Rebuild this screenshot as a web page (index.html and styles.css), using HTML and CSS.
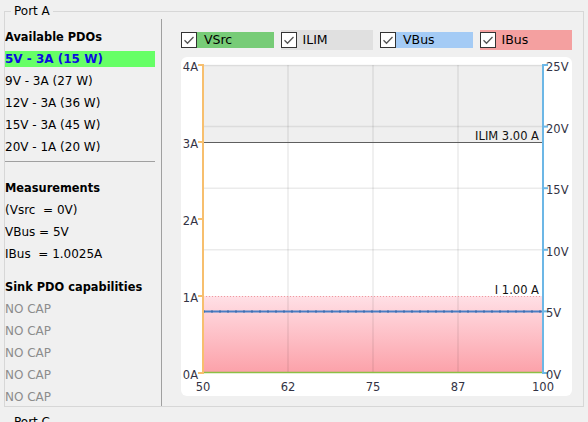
FILE: index.html
```html
<!DOCTYPE html>
<html>
<head>
<meta charset="utf-8">
<link rel="stylesheet" href="styles.css">
</head>
<body>
<div class="group port-a">
  <span class="group-title">Port A</span>
  <div class="group-body">
    <div class="side">
      <div class="row head">Available PDOs</div>
      <div class="row pdo sel">5V - 3A (15 W)</div>
      <div class="row pdo">9V - 3A (27 W)</div>
      <div class="row pdo">12V - 3A (36 W)</div>
      <div class="row pdo">15V - 3A (45 W)</div>
      <div class="row pdo">20V - 1A (20 W)</div>
      <div class="sep"></div>
      <div class="row head">Measurements</div>
      <div class="row">(Vsrc  = 0V)</div>
      <div class="row">VBus = 5V</div>
      <div class="row">IBus  = 1.0025A</div>
      <div class="row head sink">Sink PDO capabilities</div>
      <div class="row nocap">NO CAP</div>
      <div class="row nocap">NO CAP</div>
      <div class="row nocap">NO CAP</div>
      <div class="row nocap">NO CAP</div>
      <div class="row nocap">NO CAP</div>
    </div>
    <div class="vsep"></div>
    <div class="main">
      <div class="legend">
        <div class="item plain">
          <svg class="cb" width="16" height="16" viewBox="0 0 16 16"><rect x="0.5" y="0.5" width="15" height="15" fill="#fff" stroke="#333"/><polyline points="3.5,8.2 6.5,11.2 12.5,5" fill="none" stroke="#555" stroke-width="1.3"/></svg>
          <span class="lbl vsrc">VSrc</span>
        </div>
        <div class="item full ilim">
          <svg class="cb" width="16" height="16" viewBox="0 0 16 16"><rect x="0.5" y="0.5" width="15" height="15" fill="#fff" stroke="#333"/><polyline points="3.5,8.2 6.5,11.2 12.5,5" fill="none" stroke="#555" stroke-width="1.3"/></svg>
          <span class="lbl">ILIM</span>
        </div>
        <div class="item plain">
          <svg class="cb" width="16" height="16" viewBox="0 0 16 16"><rect x="0.5" y="0.5" width="15" height="15" fill="#fff" stroke="#333"/><polyline points="3.5,8.2 6.5,11.2 12.5,5" fill="none" stroke="#555" stroke-width="1.3"/></svg>
          <span class="lbl vbus">VBus</span>
        </div>
        <div class="item full ibus">
          <svg class="cb" width="16" height="16" viewBox="0 0 16 16"><rect x="0.5" y="0.5" width="15" height="15" fill="#fff" stroke="#333"/><polyline points="3.5,8.2 6.5,11.2 12.5,5" fill="none" stroke="#555" stroke-width="1.3"/></svg>
          <span class="lbl">IBus</span>
        </div>
      </div>
      <div class="card">
        <svg class="chart" width="391" height="339" viewBox="0 0 391 339">
          <defs>
            <linearGradient id="ibg" x1="0" y1="0" x2="0" y2="1">
              <stop offset="0" stop-color="#ffe0e6"/>
              <stop offset="1" stop-color="#fca1a9"/>
            </linearGradient>
          </defs>
          <rect x="22" y="8" width="340" height="77" fill="#efefef"/>
          <rect x="22" y="239" width="340" height="77" fill="url(#ibg)"/>
          <g stroke="rgba(0,0,0,0.06)" stroke-width="2">
            <line x1="107" y1="8" x2="107" y2="316"/>
            <line x1="192" y1="8" x2="192" y2="316"/>
            <line x1="277" y1="8" x2="277" y2="316"/>
          </g>
          <g stroke="rgba(0,0,0,0.08)" stroke-width="1.5">
            <line x1="22" y1="8.5" x2="362" y2="8.5"/>
            <line x1="22" y1="69.6" x2="362" y2="69.6"/>
            <line x1="22" y1="131.2" x2="362" y2="131.2"/>
            <line x1="22" y1="192.8" x2="362" y2="192.8"/>
          </g>
          <line x1="22" y1="239.5" x2="362" y2="239.5" stroke="#ee9a9f" stroke-dasharray="1 2"/>
          <line x1="361.5" y1="239" x2="361.5" y2="316" stroke="#ee9a9f" stroke-dasharray="1 2"/>
          <line x1="22" y1="85.5" x2="362" y2="85.5" stroke="#5e5e5e" stroke-width="1"/>
          <line x1="22" y1="254.4" x2="362" y2="254.4" stroke="#4a7ec4" stroke-width="2"/>
          <line x1="22" y1="254.4" x2="362" y2="254.4" stroke="#3e6fb0" stroke-width="2" stroke-dasharray="2 6"/>
          <line x1="22" y1="315.5" x2="362" y2="315.5" stroke="#8cbf45" stroke-width="1.5"/>
          <g stroke="#f7bf6e" stroke-width="2">
            <line x1="22" y1="7" x2="22" y2="317"/>
            <line x1="17" y1="8" x2="22" y2="8"/>
            <line x1="17" y1="85" x2="22" y2="85"/>
            <line x1="17" y1="162" x2="22" y2="162"/>
            <line x1="17" y1="239" x2="22" y2="239"/>
            <line x1="17" y1="316" x2="22" y2="316"/>
          </g>
          <g stroke="#6cb7e6" stroke-width="2">
            <line x1="362" y1="7" x2="362" y2="317"/>
            <line x1="362" y1="8" x2="367" y2="8"/>
            <line x1="362" y1="69.6" x2="367" y2="69.6"/>
            <line x1="362" y1="131.2" x2="367" y2="131.2"/>
            <line x1="362" y1="192.8" x2="367" y2="192.8"/>
            <line x1="362" y1="254.4" x2="367" y2="254.4"/>
            <line x1="362" y1="316" x2="367" y2="316"/>
          </g>
          <g class="ax" text-anchor="end">
            <text x="17" y="14">4A</text>
            <text x="17" y="91">3A</text>
            <text x="17" y="168">2A</text>
            <text x="17" y="245">1A</text>
            <text x="17" y="322">0A</text>
          </g>
          <g class="ax">
            <text x="365" y="14">25V</text>
            <text x="365" y="75.6">20V</text>
            <text x="365" y="137.2">15V</text>
            <text x="365" y="198.8">10V</text>
            <text x="365" y="260.4">5V</text>
            <text x="365" y="322">0V</text>
          </g>
          <g class="ax" text-anchor="middle">
            <text x="22" y="334">50</text>
            <text x="107" y="334">62</text>
            <text x="192" y="334">75</text>
            <text x="277" y="334">87</text>
            <text x="362" y="334">100</text>
          </g>
          <g class="tag" text-anchor="end">
            <text x="358" y="83">ILIM 3.00 A</text>
            <text x="358" y="237">I 1.00 A</text>
          </g>
        </svg>
      </div>
    </div>
  </div>
</div>
<div class="group port-c">
  <span class="group-title">Port C</span>
</div>
</body>
</html>
```

FILE: styles.css
```css
html, body {
  margin: 0;
  padding: 0;
  background: #f0f0f0;
  height: 422px;
  overflow: hidden;
}
body {
  font-family: "DejaVu Sans", Verdana, sans-serif;
  color: #000;
}
.group {
  position: relative;
  margin-left: 4px;
  width: 580px;
  box-sizing: border-box;
  border: 1px solid #d7d7d7;
}
.port-a {
  margin-top: 11px;
  height: 396px;
}
.port-c {
  margin-top: 15px;
  height: 40px;
}
.group-title {
  position: absolute;
  left: 6px;
  top: -8px;
  padding: 0 3px;
  height: 14px;
  line-height: 14px;
  font-size: 12px;
  background: #f0f0f0;
  color: #000;
}
.group-body {
  display: flex;
  height: 100%;
}
.side {
  width: 156px;
  flex: none;
  box-sizing: border-box;
  padding-top: 14px;
  display: flex;
  flex-direction: column;
  overflow: hidden;
}
.side > * {
  flex-shrink: 0;
}
.row {
  width: 150px;
  height: 16px;
  line-height: 16px;
  margin: 3px 0;
  font-size: 12px;
  white-space: pre;
}
.head {
  font-weight: bold;
  font-size: 11.4px;
}
.sel {
  background: #66ff66;
  color: #0c0ce0;
  font-weight: bold;
  font-size: 12px;
}
.sep {
  width: 150px;
  height: 1px;
  background: #a0a0a0;
  margin: 3px 0 15px;
}
.sink {
  margin-top: 14px;
}
.nocap {
  color: #8c8c8c;
}
.vsep {
  width: 1px;
  flex: none;
  background: #a0a0a0;
  margin-top: 7px;
}
.main {
  flex: 1;
  padding: 18px 11px 0 19px;
  display: flex;
  flex-direction: column;
}
.legend {
  display: grid;
  grid-template-columns: repeat(4, 1fr);
  column-gap: 7px;
  height: 20px;
}
.item {
  display: flex;
  align-items: center;
  height: 20px;
  font-size: 12.5px;
}
.cb {
  display: block;
  flex: none;
}
.lbl {
  flex: 1;
  height: 16px;
  line-height: 16px;
}
.plain .lbl {
  padding-left: 7px;
}
.full .lbl {
  padding-left: 6px;
}
.vsrc {
  background: #77cc77;
}
.vbus {
  background: #a4cbf5;
}
.ilim {
  background: #e0e0e0;
}
.ibus {
  background: #f4a0a0;
}
.card {
  margin-top: 7px;
  width: 391px;
  height: 339px;
  flex: none;
  background: #fff;
  border-radius: 6px;
}
.chart {
  display: block;
}
.ax {
  font-family: "DejaVu Sans", Verdana, sans-serif;
  font-size: 11.5px;
  fill: #333344;
}
.tag {
  font-family: "DejaVu Sans", Verdana, sans-serif;
  font-size: 11.5px;
  fill: #111;
}
```
